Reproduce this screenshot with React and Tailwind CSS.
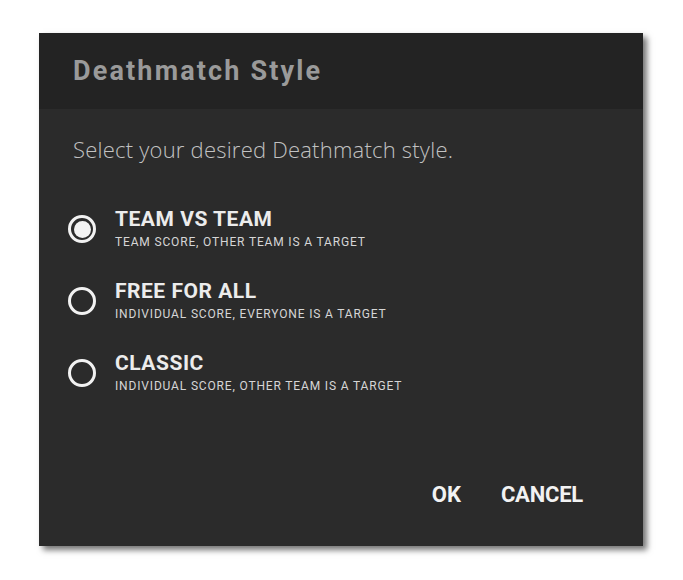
const options = [
  { title: 'TEAM VS TEAM', desc: 'TEAM SCORE, OTHER TEAM IS A TARGET', selected: true },
  { title: 'FREE FOR ALL', desc: 'INDIVIDUAL SCORE, EVERYONE IS A TARGET', selected: false },
  { title: 'CLASSIC', desc: 'INDIVIDUAL SCORE, OTHER TEAM IS A TARGET', selected: false },
];

function Radio({ selected }) {
  return (
    <div className="w-[28px] h-[28px] rounded-full border-[3px] border-[#f2f2f2] flex items-center justify-center shrink-0">
      {selected && <div className="w-[17px] h-[17px] rounded-full bg-[#f2f2f2]"></div>}
    </div>
  );
}

export default function App() {
  return (
    <div className="w-[683px] h-[580px] bg-white pt-[33px] pl-[39px]">
      <div className="w-[604px] h-[513px] bg-[#2b2b2b] flex flex-col shadow-[4px_4px_6px_rgba(0,0,0,0.55)]">
        <div className="h-[76px] bg-[#232323] flex items-center pl-[34px]">
          <span className="text-[27px] font-bold text-[#9a9a9a] tracking-[0.08em]" style={{ fontFamily: 'Roboto, sans-serif' }}>Deathmatch Style</span>
        </div>
        <div className="flex-1 flex flex-col pl-[29px]">
          <p className="mt-[26px] ml-[5px] text-[22px] leading-[28px] font-light text-[#c2c2c2] tracking-[0.01em]" style={{ fontFamily: '"Open Sans", sans-serif' }}>
            Select your desired Deathmatch style.
          </p>
          <div className="mt-[44px] flex flex-col gap-[28px]" style={{ fontFamily: 'Roboto, sans-serif' }}>
            {options.map((o) => (
              <div key={o.title} className="flex items-center gap-[19px]">
                <Radio selected={o.selected} />
                <div className="flex flex-col">
                  <span className="text-[21px] leading-[24px] font-bold text-[#ececec] tracking-[0.025em]">{o.title}</span>
                  <span className="mt-[2px] text-[12px] leading-[18px] font-normal text-[#d6d6d6] tracking-[0.07em]">{o.desc}</span>
                </div>
              </div>
            ))}
          </div>
          <div className="mt-auto mb-[35px] mr-[60px] flex justify-end gap-[40px]" style={{ fontFamily: 'Roboto, sans-serif' }}>
            <span className="text-[22px] font-bold text-[#f2f2f2]">OK</span>
            <span className="text-[22px] font-bold text-[#f2f2f2] tracking-[-0.01em]">CANCEL</span>
          </div>
        </div>
      </div>
    </div>
  );
}
